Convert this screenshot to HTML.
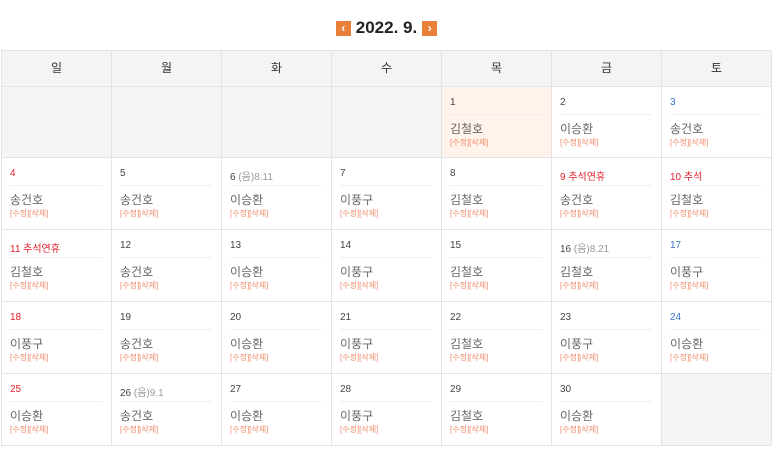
<!DOCTYPE html>
<html><head><meta charset="utf-8"><style>
body{margin:0;background:#fff;font-family:"Liberation Sans","Noto Sans CJK KR",sans-serif;width:773px;height:450px;overflow:hidden;position:relative}
.t{position:absolute;top:18px;left:0;width:773px;text-align:center;font-size:17px;color:#222;font-weight:bold}
.b{display:inline-block;width:15px;height:15px;background:#e8803a;color:#fff;font-size:12px;line-height:15px;vertical-align:1px;margin:0 5px;font-weight:bold}
.g{position:absolute;left:1px;top:50px;display:grid;grid-template-columns:repeat(7,110px);grid-template-rows:36px 71px 72px 72px 72px 72px;border-left:1px solid #e3e3e3;border-top:1px solid #e3e3e3}
.g>div{border-right:1px solid #e3e3e3;border-bottom:1px solid #e3e3e3;box-sizing:border-box;position:relative;background:#fff}
.h{background:#f4f4f4!important;text-align:center;line-height:35px;font-size:12px;color:#333}
.e{background:#f4f4f4!important}
.today{background:#fff3ec!important}
.n{position:absolute;left:8px;top:10px;font-size:10px;color:#444;width:92px;height:17px;border-bottom:1px solid #eee}
.n i{font-style:normal;color:#999}
.r{color:#e4202b}.bl{color:#3a73c4}
.nm{position:absolute;left:8px;top:33px;font-size:12px;color:#666}
.lk{position:absolute;left:8px;top:50px;font-size:8px;color:#f08a6a}
</style></head><body>
<div class="t"><span class="b">‹</span>2022. 9.<span class="b">›</span></div>
<div class="g">
<div class="h">일</div><div class="h">월</div><div class="h">화</div><div class="h">수</div><div class="h">목</div><div class="h">금</div><div class="h">토</div>
<div class="e"></div><div class="e"></div><div class="e"></div><div class="e"></div>
<div class="today"><div class="n">1</div><div class="nm">김철호</div><div class="lk">[수정][삭제]</div></div>
<div><div class="n">2</div><div class="nm">이승환</div><div class="lk">[수정][삭제]</div></div>
<div><div class="n bl">3</div><div class="nm">송건호</div><div class="lk">[수정][삭제]</div></div>

<div><div class="n r">4</div><div class="nm">송건호</div><div class="lk">[수정][삭제]</div></div>
<div><div class="n">5</div><div class="nm">송건호</div><div class="lk">[수정][삭제]</div></div>
<div><div class="n">6 <i>(음)8.11</i></div><div class="nm">이승환</div><div class="lk">[수정][삭제]</div></div>
<div><div class="n">7</div><div class="nm">이풍구</div><div class="lk">[수정][삭제]</div></div>
<div><div class="n">8</div><div class="nm">김철호</div><div class="lk">[수정][삭제]</div></div>
<div><div class="n r">9 추석연휴</div><div class="nm">송건호</div><div class="lk">[수정][삭제]</div></div>
<div><div class="n r">10 추석</div><div class="nm">김철호</div><div class="lk">[수정][삭제]</div></div>

<div><div class="n r">11 추석연휴</div><div class="nm">김철호</div><div class="lk">[수정][삭제]</div></div>
<div><div class="n">12</div><div class="nm">송건호</div><div class="lk">[수정][삭제]</div></div>
<div><div class="n">13</div><div class="nm">이승환</div><div class="lk">[수정][삭제]</div></div>
<div><div class="n">14</div><div class="nm">이풍구</div><div class="lk">[수정][삭제]</div></div>
<div><div class="n">15</div><div class="nm">김철호</div><div class="lk">[수정][삭제]</div></div>
<div><div class="n">16 <i>(음)8.21</i></div><div class="nm">김철호</div><div class="lk">[수정][삭제]</div></div>
<div><div class="n bl">17</div><div class="nm">이풍구</div><div class="lk">[수정][삭제]</div></div>

<div><div class="n r">18</div><div class="nm">이풍구</div><div class="lk">[수정][삭제]</div></div>
<div><div class="n">19</div><div class="nm">송건호</div><div class="lk">[수정][삭제]</div></div>
<div><div class="n">20</div><div class="nm">이승환</div><div class="lk">[수정][삭제]</div></div>
<div><div class="n">21</div><div class="nm">이풍구</div><div class="lk">[수정][삭제]</div></div>
<div><div class="n">22</div><div class="nm">김철호</div><div class="lk">[수정][삭제]</div></div>
<div><div class="n">23</div><div class="nm">이풍구</div><div class="lk">[수정][삭제]</div></div>
<div><div class="n bl">24</div><div class="nm">이승환</div><div class="lk">[수정][삭제]</div></div>

<div><div class="n r">25</div><div class="nm">이승환</div><div class="lk">[수정][삭제]</div></div>
<div><div class="n">26 <i>(음)9.1</i></div><div class="nm">송건호</div><div class="lk">[수정][삭제]</div></div>
<div><div class="n">27</div><div class="nm">이승환</div><div class="lk">[수정][삭제]</div></div>
<div><div class="n">28</div><div class="nm">이풍구</div><div class="lk">[수정][삭제]</div></div>
<div><div class="n">29</div><div class="nm">김철호</div><div class="lk">[수정][삭제]</div></div>
<div><div class="n">30</div><div class="nm">이승환</div><div class="lk">[수정][삭제]</div></div>
<div class="e"></div>
</div>
</body></html>
